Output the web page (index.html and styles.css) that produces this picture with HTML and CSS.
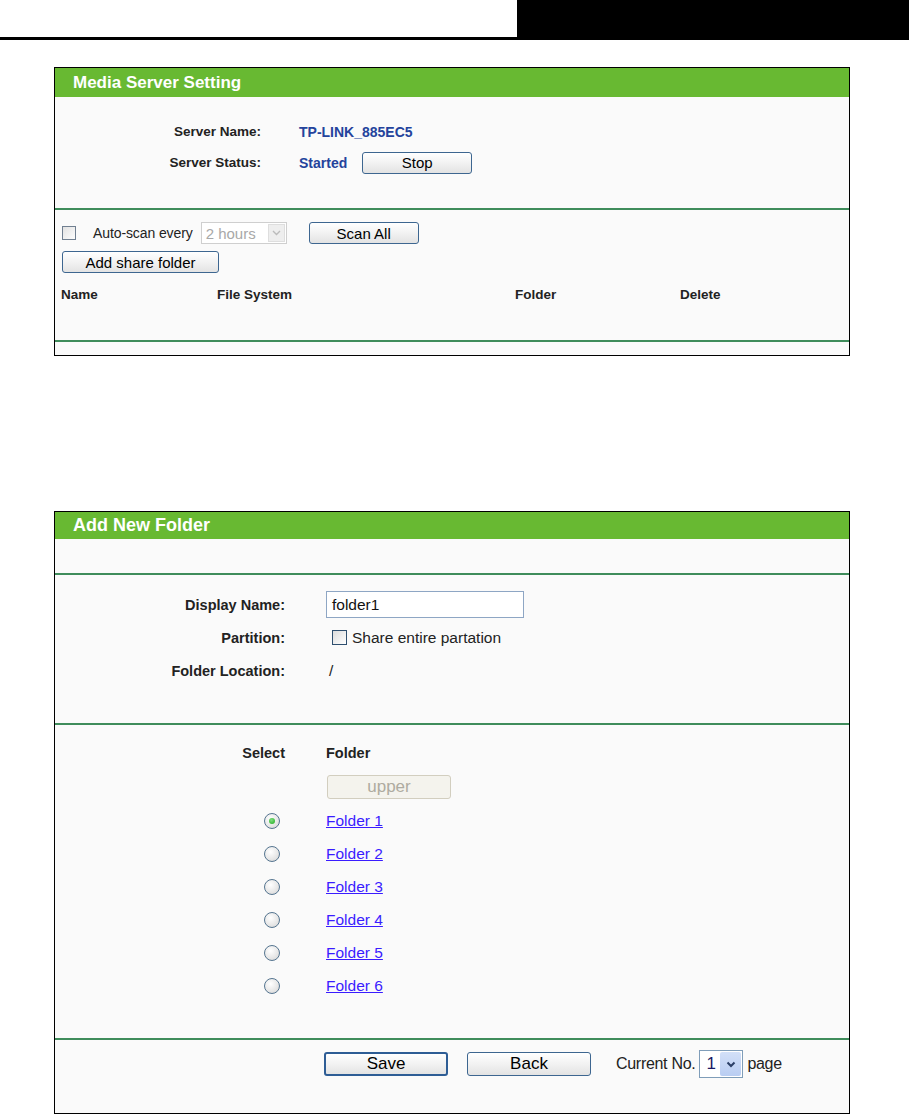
FILE: index.html
```html
<!DOCTYPE html>
<html>
<head>
<meta charset="utf-8">
<title>Media Server</title>
<link rel="stylesheet" href="styles.css">
</head>
<body>
<div class="topbar">
  <div class="topbar-fill"></div>
  <div class="topbar-tab"></div>
</div>
<div class="rule"></div>

<div class="panel panel-media">
  <div class="panel-head h29">Media Server Setting</div>
  <div class="sec sec-server">
    <div class="row1">
      <div class="lbl">Server Name:</div>
      <div class="val blue">TP-LINK_885EC5</div>
    </div>
    <div class="row1">
      <div class="lbl">Server Status:</div>
      <div class="val blue status">Started <button class="btn btn-stop">Stop</button></div>
    </div>
  </div>
  <div class="gline"></div>
  <div class="sec sec-scan">
    <div class="scan-row">
      <span class="cbox"></span>
      <span class="autoscan">Auto-scan every</span>
      <span class="sel-dis"><span class="sel-text">2 hours</span><span class="sel-arrow"><svg width="9" height="6" viewBox="0 0 9 6"><path d="M1 1 L4.5 4.5 L8 1" fill="none" stroke="#bbb" stroke-width="1.4"/></svg></span></span>
      <button class="btn btn-scan">Scan All</button>
    </div>
    <div class="add-row">
      <button class="btn btn-add">Add share folder</button>
    </div>
    <div class="cols">
      <div>Name</div><div>File System</div><div>Folder</div><div>Delete</div>
    </div>
  </div>
  <div class="gline"></div>
  <div class="sec sec-foot1"></div>
</div>

<div class="panel panel-folder">
  <div class="panel-head h27">Add New Folder</div>
  <div class="sec sec-empty"></div>
  <div class="gline"></div>
  <div class="sec sec-form">
    <div class="row2">
      <div class="lbl2">Display Name:</div>
      <div class="val2"><span class="textin">folder1</span></div>
    </div>
    <div class="row2">
      <div class="lbl2">Partition:</div>
      <div class="val2"><span class="cbox2"></span><span class="share">Share entire partation</span></div>
    </div>
    <div class="row2">
      <div class="lbl2">Folder Location:</div>
      <div class="val2 loc">/</div>
    </div>
  </div>
  <div class="gline"></div>
  <div class="sec sec-list">
    <div class="row2">
      <div class="lbl2">Select</div>
      <div class="val2 bold">Folder</div>
    </div>
    <div class="row2 row-upper">
      <div></div>
      <div class="val2"><span class="btn-upper">upper</span></div>
    </div>
    <div class="row2"><div class="rcell"><span class="radio checked"></span></div><div class="val2"><a class="flink" href="#">Folder 1</a></div></div>
    <div class="row2"><div class="rcell"><span class="radio"></span></div><div class="val2"><a class="flink" href="#">Folder 2</a></div></div>
    <div class="row2"><div class="rcell"><span class="radio"></span></div><div class="val2"><a class="flink" href="#">Folder 3</a></div></div>
    <div class="row2"><div class="rcell"><span class="radio"></span></div><div class="val2"><a class="flink" href="#">Folder 4</a></div></div>
    <div class="row2"><div class="rcell"><span class="radio"></span></div><div class="val2"><a class="flink" href="#">Folder 5</a></div></div>
    <div class="row2"><div class="rcell"><span class="radio"></span></div><div class="val2"><a class="flink" href="#">Folder 6</a></div></div>
  </div>
  <div class="gline"></div>
  <div class="sec sec-actions">
    <div class="act-row">
      <button class="btn btn-big btn-save">Save</button>
      <button class="btn btn-big btn-back">Back</button>
      <span class="curno">Current No.</span>
      <span class="pagesel"><span class="pagesel-val">1</span><span class="pagesel-arrow"><svg width="10" height="7" viewBox="0 0 10 7"><path d="M1.5 1.5 L5 5 L8.5 1.5" fill="none" stroke="#2b3f66" stroke-width="2"/></svg></span></span>
      <span class="curno page">page</span>
    </div>
  </div>
</div>
</body>
</html>
```
FILE: styles.css
```css
* { box-sizing: border-box; }
body {
  margin: 0;
  background: #fff;
  font-family: "Liberation Sans", Arial, sans-serif;
  color: #000;
}
.topbar { display: flex; height: 37px; }
.topbar-fill { flex: 1; }
.topbar-tab { width: 392px; background: #000; }
.rule { height: 3px; background: #000; }

.panel {
  margin-left: 54px;
  width: 796px;
  border: 1px solid #000;
  background: #fafafa;
}
.panel-media { margin-top: 27px; }
.panel-folder { margin-top: 155px; }

.panel-head {
  background: #68b932;
  color: #fff;
  font-weight: bold;
  padding-left: 18px;
  display: flex;
  align-items: center;
}
.h29 { height: 29px; font-size: 17px; }
.h27 { height: 27px; font-size: 18px; }

.gline { height: 2px; background: #3f8c5b; }

/* Panel 1 */
.sec-server { padding: 19px 0 30px; height: 111px; }
.row1 {
  display: grid;
  grid-template-columns: 206px 1fr;
  column-gap: 38px;
  height: 31px;
  align-items: center;
  font-size: 13.5px;
  font-weight: bold;
}
.lbl { text-align: right; color: #222; }
.val { font-size: 14px; }
.blue { color: #24439c; }
.status { display: flex; align-items: center; gap: 15px; }

.btn {
  font-family: "Liberation Sans", Arial, sans-serif;
  font-size: 15px;
  font-weight: normal;
  color: #000;
  height: 22px;
  padding: 0;
  border: 1px solid #3d6690;
  border-radius: 3px;
  background: linear-gradient(#ffffff, #f2f2f2 50%, #e3e3e3);
}
.btn-stop { width: 110px; }

.sec-scan { height: 130px; padding: 12px 0 0 7px; }
.scan-row { display: flex; align-items: center; height: 22px; }
.cbox {
  width: 14px; height: 14px;
  border: 1px solid #707f90;
  background: linear-gradient(135deg, #e2e2e2, #fdfdfd);
}
.autoscan { margin-left: 17px; font-size: 14px; color: #222; letter-spacing: -0.1px; }
.sel-dis {
  margin-left: 8px;
  width: 86px; height: 22px;
  border: 1px solid #cfcfcf;
  background: #fff;
  display: flex; align-items: stretch;
}
.sel-text { flex: 1; color: #a8a8a8; font-size: 15px; padding-left: 4px; display: flex; align-items: center; }
.sel-arrow {
  width: 17px; margin: 1px;
  background: #eeeeee;
  border: 1px solid #dedede;
  display: flex; align-items: center; justify-content: center;
}
.btn-scan { width: 110px; margin-left: 22px; }
.add-row { margin-top: 7px; height: 22px; display: flex; }
.btn-add { width: 157px; }
.cols {
  margin-top: 10px;
  height: 22px;
  margin-left: -1px;
  display: grid;
  grid-template-columns: 156px 298px 165px 1fr;
  align-items: center;
  font-size: 13.5px;
  font-weight: bold;
  color: #222;
}
.sec-foot1 { height: 13px; }

/* Panel 2 */
.sec-empty { height: 34px; }
.sec-form { height: 148px; padding-top: 13px; }
.row2 {
  display: grid;
  grid-template-columns: 230px 1fr;
  column-gap: 41px;
  height: 33px;
  align-items: center;
  font-size: 15.5px;
}
.lbl2 { text-align: right; font-weight: bold; color: #222; font-size: 14.5px; }
.val2 { display: flex; align-items: center; color: #222; }
.bold { font-weight: bold; font-size: 14.5px; }
.textin {
  width: 198px; height: 27px;
  border: 1px solid #8ea6c4;
  background: #fff;
  padding-left: 5px;
  display: flex; align-items: center;
  color: #111;
}
.cbox2 {
  width: 15px; height: 15px;
  margin-left: 6px;
  border: 1px solid #2f4f6f;
  background: linear-gradient(135deg, #dcdcdc, #ffffff);
}
.share { margin-left: 5px; }
.loc { padding-left: 3px; }

.sec-list { height: 313px; padding-top: 11px; }
.row-upper { height: 35px; }
.btn-upper {
  margin-left: 1px;
  width: 124px; height: 24px;
  border: 1px solid #d2cebf;
  border-radius: 3px;
  background: #f4f3ed;
  color: #aeaba0;
  font-size: 17px;
  display: flex; align-items: center; justify-content: center;
}
.rcell { display: flex; justify-content: flex-end; padding-right: 5px; }
.radio {
  width: 16px; height: 16px;
  border-radius: 50%;
  border: 1.5px solid #557590;
  background: radial-gradient(circle at 40% 35%, #ffffff, #e6e6e6 60%, #cfcfcf);
  display: flex; align-items: center; justify-content: center;
}
.radio.checked::after {
  content: "";
  width: 6px; height: 6px;
  border-radius: 50%;
  background: radial-gradient(circle at 40% 35%, #7fe07f, #1fa81f);
}
.flink { color: #3a1cff; text-decoration: underline; }

.sec-actions { height: 73px; padding: 12px 0 0 269px; }
.act-row { display: flex; align-items: center; height: 24px; }
.btn-big { width: 124px; height: 24px; font-size: 17px; }
.btn-save { border: 2px solid #2e5d95; }
.btn-back { margin-left: 19px; }
.curno { font-size: 16px; color: #222; margin-left: 25px; letter-spacing: -0.3px; }
.page { margin-left: 4px; }
.pagesel {
  margin-left: 4px;
  width: 44px; height: 28px;
  border: 1px solid #7f9db9;
  background: #fff;
  display: flex; align-items: stretch;
}
.pagesel-val { flex: 1; display: flex; align-items: center; padding-left: 6px; font-size: 17px; color: #1a1a66; }
.pagesel-arrow {
  width: 21px; margin: 1px;
  background: linear-gradient(#d3e0f8, #b9cdf2);
  border-radius: 2px;
  display: flex; align-items: center; justify-content: center;
}
```
